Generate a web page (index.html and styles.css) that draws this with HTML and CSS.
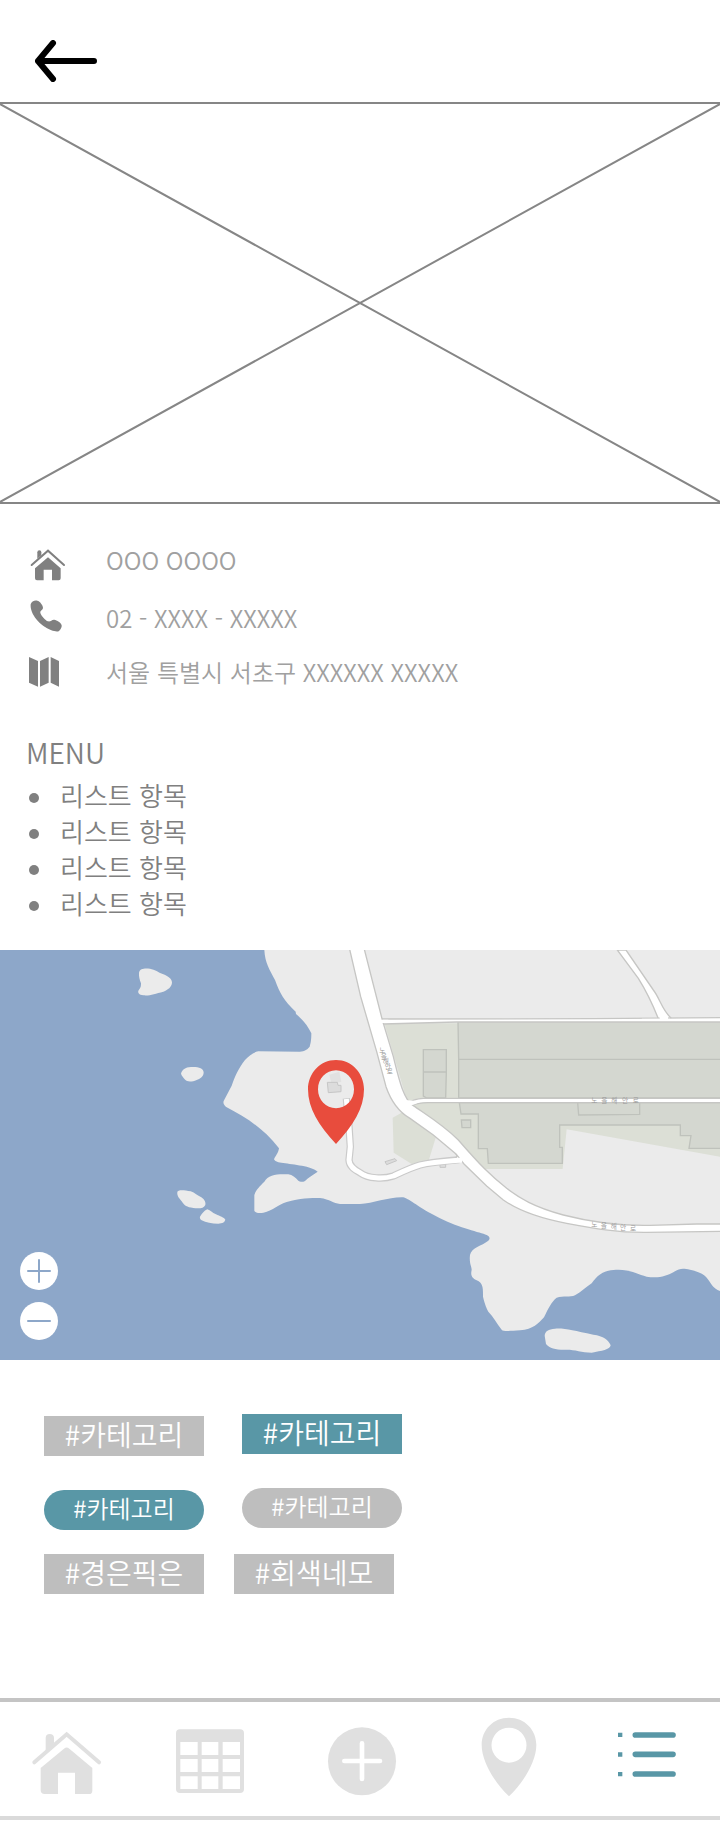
FILE: index.html
```html
<!DOCTYPE html>
<html lang="ko">
<head>
<meta charset="utf-8">
<meta name="viewport" content="width=device-width, initial-scale=1">
<title>OOO OOOO</title>
<link rel="stylesheet" href="styles.css">
</head>
<body>
<header class="topbar">
  <button class="back" type="button" aria-label="뒤로">
    <svg class="back-icon" viewBox="0 0 64 42" aria-hidden="true"><path d="M60 21H4M19 3L4 21L19 39"/></svg>
  </button>
</header>
<main>
  <div class="photo" role="img" aria-label="사진">
    <svg class="photo-cross" viewBox="0 0 100 100" preserveAspectRatio="none" aria-hidden="true"><path d="M0 0L100 100M100 0L0 100"/></svg>
  </div>

  <section class="info">
    <div class="info-row info-row--high">
      <svg class="info-icon" viewBox="0 -7 108 108" aria-hidden="true">
        <path class="fill" d="M15 66L54 33L92 66V96Q92 102 86 102H66V70H41V102H21Q15 102 15 96Z"/>
        <path class="fill" d="M22 37V18Q22 12 28 12Q34 12 34 18V27Z"/>
        <path class="line" d="M5 56L54 13L102 56"/>
      </svg>
      <p class="info-text">OOO OOOO</p>
    </div>
    <div class="info-row info-row--low">
      <svg class="info-icon" viewBox="0 3 108 108" aria-hidden="true">
        <path class="fill" d="M2 19C4 10 14 6 22 8C30 9 39 23 39 29C39 36 30 37 31 44C33 53 46 67 54 70C62 72 65 64 73 65C80 66 94 74 95 82C96 88 92 95 87 99C83 102 72 100 64 97C30 84 -1 48 2 19Z"/>
      </svg>
      <p class="info-text">02 - XXXX - XXXXX</p>
    </div>
    <div class="info-row">
      <svg class="info-icon" viewBox="0 0 108 108" aria-hidden="true">
        <path class="fill" d="M-3 9L24 21V98L-3 86ZM30 21L56 9V86L30 98ZM62 9L87 21V98L62 86Z"/>
      </svg>
      <p class="info-text">서울 특별시 서초구 XXXXXX XXXXX</p>
    </div>
  </section>

  <section class="menu">
    <h2 class="menu-title">MENU</h2>
    <ul class="menu-list">
      <li class="menu-item">리스트 항목</li>
      <li class="menu-item">리스트 항목</li>
      <li class="menu-item">리스트 항목</li>
      <li class="menu-item">리스트 항목</li>
    </ul>
  </section>

  <section class="map" aria-label="지도">
    <svg class="map-art" viewBox="0 30 2160 1230" role="img" aria-label="노을해안로 지도">
      <g class="land">
        <path d="M793 30C795 70 810 90 825 120C840 160 850 180 887 215L888 222C915 245 925 262 934 280C934 300 932 310 929 320C920 332 908 335 895 335L775 334C760 336 745 350 735 360C712 390 705 410 695 437L671 483C668 492 675 497 680 502C740 533 790 565 837 625C835 640 825 650 822 658C825 665 835 668 850 669C880 674 935 678 953 695C940 705 925 712 915 723C908 727 900 726 895 722C885 712 878 705 865 703C835 701 805 703 793 725C780 738 767 750 763 765V812C766 820 780 819 790 818C820 812 830 795 860 786C900 774 930 774 960 774C990 778 1000 790 1020 792H1080C1120 790 1170 770 1210 772C1235 780 1250 800 1320 835C1380 865 1440 877 1460 885C1470 890 1471 896 1465 902C1445 918 1415 922 1410 945C1407 970 1415 980 1415 990C1410 1010 1420 1015 1430 1021C1450 1030 1449 1045 1449 1070C1455 1095 1460 1105 1465 1115C1480 1130 1490 1150 1505 1169C1510 1175 1530 1173 1560 1171C1600 1168 1615 1150 1632 1132C1645 1105 1655 1085 1670 1073C1690 1067 1710 1073 1725 1066C1745 1055 1755 1043 1775 1030C1790 1010 1805 992 1840 990C1890 986 1910 1002 1940 1010C1975 1016 2000 1008 2020 997C2040 983 2050 985 2070 989C2110 998 2120 1010 2132 1030C2142 1045 2150 1050 2160 1053V30Z"/>
        <path d="M417 98C420 84 435 85 450 86C465 88 475 97 488 102C505 108 516 117 516 128C514 142 505 148 490 155C465 161 450 168 430 166C417 165 412 158 416 151C423 142 423 138 423 130C419 118 416 110 417 98Z"/>
        <path d="M543 400C550 384 560 381 580 381C597 381 611 386 611 398C610 410 600 416 590 420C575 426 562 427 554 418C549 412 544 407 543 400Z"/>
        <path d="M532 756C533 749 550 749 572 754C585 759 592 766 604 772C614 779 618 787 616 795C612 806 595 806 580 804C560 802 553 796 547 787C541 777 530 770 532 756Z"/>
        <path d="M600 830C605 822 612 812 622 808C632 811 636 818 648 823C660 829 672 832 676 839C674 847 667 850 655 851C635 851 618 848 605 841C600 837 599 834 600 830Z"/>
        <path d="M1634 1187C1636 1172 1645 1168 1665 1166C1695 1164 1720 1172 1780 1184C1810 1188 1826 1200 1832 1216C1830 1229 1805 1233 1775 1238C1745 1237 1725 1229 1700 1229C1670 1230 1650 1226 1638 1212Z"/>
      </g>
      <path class="park" d="M1153 250H2160V650L1700 568L1688 687H1455L1220 480ZM1178 533L1210 515L1308 590L1285 665L1235 672L1181 638Z"/>
      <g class="block">
        <path d="M1374 244H2170V358H1376ZM1376 358H2170V474H1376Z"/>
        <path d="M1378 488L1383 522H1435V626H1462L1465 670H1687V622H1679V555H2041V587H2073L2067 625H2170V488Z"/>
        <path d="M1733 488L1736 525L1919 523V488ZM1270 329H1339V396H1270ZM1270 396H1339L1337 474H1280L1270 468ZM1384 540H1412V563H1386Z"/>
      </g>
      <g class="house">
        <path class="faint" d="M988 404L1018 395L1024 426L994 430Z"/>
        <path d="M982 427H1012L1014 436H1023V455L985 458ZM1155 665L1185 656L1190 662L1160 674ZM1320 670H1337V682H1320Z"/>
      </g>
      <path class="casing lane" d="M1039 475L1047 560L1051 620L1047 660C1048 680 1065 690 1080 698C1105 716 1150 718 1180 708C1210 694 1235 682 1260 675C1300 665 1330 664 1378 659"/>
      <path class="road-edge" d="M1852 30L1915 115C1940 155 1955 185 1975 236H2015C1985 210 1980 175 1960 150L1878 30ZM1366 640Q1375 648 1366 656L1398 668Z"/>
      <path class="road-edge" d="M1140 237L1780 236L2170 233V246H1370L1150 252ZM1225 490C1235 480 1245 476 1270 475H2170V488H1290C1260 487 1250 490 1235 496Z"/>
      <path class="road-edge" d="M1049 28L1082 170L1130 335L1158 440C1172 480 1195 515 1230 535L1300 585L1368 642L1392 672L1460 738L1510 780C1560 815 1620 835 1700 850C1780 865 1850 878 1940 877L2170 874V852H2090L1950 856C1850 858 1760 843 1690 825C1600 800 1560 775 1520 745C1470 705 1440 675 1375 600C1330 555 1280 525 1240 497C1210 480 1195 410 1180 350L1153 260L1147 240L1093 28Z"/>
      <path class="lane" d="M1039 477L1047 560L1051 620L1047 660C1048 680 1065 690 1080 698C1105 716 1150 718 1180 708C1210 694 1235 682 1260 675C1300 665 1330 664 1386 660"/>
      <path class="road-fill" d="M1120 239H1165V249H1140ZM1925 236H2010L2000 242H1930ZM1978 228H2004V240H1980ZM1215 480L1250 483L1260 487L1240 494L1210 500Z"/>
      <g class="road-name">
        <text x="1774 1804 1834 1866 1898" y="488">노을해안로</text>
        <text x="1774 1802 1832 1860 1890" y="860 864 868 871 874">노을해안로</text>
        <text x="1138 1142 1148 1154 1160" y="339 356 373 388 403">노을해안로</text>
      </g>
      <path class="pin" fill-rule="evenodd" d="M1008 360C1056 360 1092 400 1092 448C1092 505 1060 556 1008 612C956 556 924 505 924 448C924 400 960 360 1008 360ZM1008 391C978 391 954 416 954 448S978 505 1008 505S1062 480 1062 448S1038 391 1008 391Z"/>
    </svg>
    <div class="zoom">
      <button class="zoom-button" type="button" aria-label="확대"><svg class="zoom-icon" viewBox="0 0 38 38" aria-hidden="true"><path d="M8 19H30M19 8V30"/></svg></button>
      <button class="zoom-button" type="button" aria-label="축소"><svg class="zoom-icon" viewBox="0 0 38 38" aria-hidden="true"><path d="M8 19H30"/></svg></button>
    </div>
  </section>

  <section class="tags" aria-label="카테고리">
    <div class="tag-row tag-row--stepped">
      <button class="tag" type="button">#카테고리</button>
      <button class="tag tag--active" type="button">#카테고리</button>
    </div>
    <div class="tag-row tag-row--stepped tag-row--pills">
      <button class="tag tag--pill tag--active" type="button">#카테고리</button>
      <button class="tag tag--pill" type="button">#카테고리</button>
    </div>
    <div class="tag-row">
      <button class="tag" type="button">#경은픽은</button>
      <button class="tag" type="button">#회색네모</button>
    </div>
  </section>
</main>

<nav class="tabs" aria-label="메인">
  <a class="tab" href="#home" aria-label="홈"><svg class="tab-icon" viewBox="0 66 432 342" aria-hidden="true">
    <path class="fill" d="M122 264L192 206Q200 199 208 206L277 264V332Q277 342 267 342H225V278H174V342H134Q122 342 122 330Z"/>
    <path class="fill" d="M137 213V174Q137 162 149 162Q162 162 162 174V190Z"/>
    <path class="line" d="M103 247L200 163L297 247"/>
  </svg></a>
  <a class="tab" href="#calendar" aria-label="달력"><svg class="tab-icon" viewBox="432 66 432 342" aria-hidden="true">
    <path class="fill" fill-rule="evenodd" d="M540 148H720Q732 148 732 160V328Q732 339 720 339H540Q528 339 528 328V160Q528 148 540 148ZM541 186V225H593V186ZM605 186V225H655V186ZM668 186V225H720V186ZM541 237V276H593V237ZM605 237V276H655V237ZM668 237V276H720V237ZM541 289V327H593V289ZM605 289V327H655V289ZM668 289V327H720V289Z"/>
  </svg></a>
  <a class="tab" href="#add" aria-label="추가"><svg class="tab-icon" viewBox="864 66 432 342" aria-hidden="true">
    <circle class="fill" cx="1086" cy="244" r="102"/>
    <path class="plus" d="M1033 243H1140M1086 190V297"/>
  </svg></a>
  <a class="tab" href="#map" aria-label="지도"><svg class="tab-icon" viewBox="1296 66 432 342" aria-hidden="true">
    <path class="fill" fill-rule="evenodd" d="M1527 113C1574 113 1609 149 1609 195C1609 245 1570 308 1527 349C1484 308 1445 245 1445 195C1445 149 1480 113 1527 113ZM1527 143A52 52 0 1 0 1527 248A52 52 0 1 0 1527 143Z"/>
  </svg></a>
  <a class="tab tab--active" href="#list" aria-label="목록" aria-current="page"><svg class="tab-icon" viewBox="1728 66 432 342" aria-hidden="true">
    <path class="bars" d="M1906 165H2019M1906 223H2019M1906 282H2019"/>
    <path class="fill" d="M1854 158H1867V171H1854ZM1854 217H1867V230H1854ZM1854 276H1867V289H1854Z"/>
  </svg></a>
</nav>
</body>
</html>
```
FILE: styles.css
```css
* {
  box-sizing: border-box;
}

body {
  margin: 0;
  background: #fff;
  color: #808080;
  font-family: "Noto Sans CJK KR", sans-serif;
  font-weight: 350;
}

button {
  margin: 0;
  padding: 0;
  border: 0;
  background: none;
  font: inherit;
  cursor: pointer;
}

svg {
  display: block;
}

.topbar {
  padding: 40px 34px 20px;
}

.back {
  display: block;
}

.back-icon {
  width: 64px;
  height: 42px;
  fill: none;
  stroke: #000;
  stroke-width: 6;
  stroke-linecap: round;
  stroke-linejoin: round;
}

.photo {
  height: 402px;
  border-top: 2px solid #868686;
  border-bottom: 2px solid #868686;
}

.photo-cross {
  width: 100%;
  height: 100%;
}

.photo-cross path {
  fill: none;
  stroke: #868686;
  stroke-width: 2;
  vector-effect: non-scaling-stroke;
}

.info {
  display: flex;
  flex-direction: column;
  gap: 16px;
  padding: 38px 30px 41px;
}

.info-row {
  display: flex;
  align-items: center;
  gap: 40px;
  min-height: 39px;
}

.info-row--high .info-text {
  align-self: flex-start;
}

.info-row--low .info-text {
  align-self: flex-end;
}

.info-icon {
  flex: none;
  width: 36px;
  height: 36px;
  overflow: visible;
}

.fill {
  fill: currentColor;
}

.line {
  fill: none;
  stroke: currentColor;
  stroke-width: 6;
  stroke-linecap: round;
}

.info-text {
  margin: 0;
  color: #a0a0a0;
  font-size: 24px;
  line-height: 36px;
}

.menu {
  padding: 0 26px 29px;
}

.menu-title {
  margin: 0 0 5px;
  font-size: 28px;
  font-weight: inherit;
  line-height: 40px;
}

.menu-list {
  margin: 0;
  padding: 0;
  list-style: none;
}

.menu-item {
  display: flex;
  align-items: center;
  gap: 21px;
  padding-left: 3px;
  font-size: 26px;
  line-height: 36px;
}

.menu-item::before {
  content: "";
  width: 10px;
  height: 10px;
  margin-top: 6px;
  border-radius: 50%;
  background: currentColor;
}

.map {
  position: relative;
  background: #8da7c9;
}

.map-art {
  width: 100%;
}

.land {
  fill: #ebebeb;
}

.park {
  fill: #dcdfd6;
}

.block {
  fill: #d4d7d0;
  stroke: #bfc2bc;
  stroke-width: 4;
}

.house {
  fill: #dcdcdc;
  stroke: #c6c6c6;
  stroke-width: 3;
}

.faint {
  fill: #e1e1e1;
  stroke: none;
}

.lane {
  fill: none;
  stroke: #fff;
  stroke-width: 15;
}

.casing {
  stroke: #cacaca;
  stroke-width: 22;
}

.road-edge {
  fill: #fff;
  stroke: #c6c6c4;
  stroke-width: 4;
}

.road-fill {
  fill: #fff;
}

.road-name {
  fill: #999;
  font-size: 20px;
}

.pin {
  fill: #e84c3d;
}

.zoom {
  position: absolute;
  bottom: 20px;
  left: 20px;
  display: grid;
  gap: 12px;
}

.zoom-button {
  width: 38px;
  height: 38px;
  border-radius: 50%;
  background: #fff;
}

.zoom-icon {
  width: 38px;
  height: 38px;
  fill: none;
  stroke: #8da7c9;
  stroke-width: 2;
  stroke-linecap: round;
}

.tags {
  display: flex;
  flex-direction: column;
  padding: 54px 44px 104px;
}

.tag-row {
  display: flex;
  gap: 30px;
}

.tag-row--stepped {
  gap: 38px;
  height: 42px;
  margin-bottom: 32px;
}

.tag-row--pills {
  margin-bottom: 24px;
}

.tag-row--stepped .tag:first-child {
  align-self: flex-end;
}

.tag {
  width: 160px;
  height: 40px;
  padding-bottom: 4px;
  background: #bebebe;
  color: #fff;
  font-size: 28px;
  line-height: 36px;
}

.tag--pill {
  border-radius: 20px;
  font-size: 24px;
}

.tag--active {
  background: #5997a6;
}

.tabs {
  display: flex;
  border-top: 4px solid #c4c4c4;
  border-bottom: 4px solid #dadada;
}

.tab {
  display: flex;
  flex: 1;
  justify-content: center;
  color: #e0e0e0;
}

.tab--active {
  color: #5997a6;
}

.tab-icon {
  width: 144px;
  height: 114px;
}

.tab-icon .line {
  stroke-width: 12;
}

.plus {
  fill: none;
  stroke: #fff;
  stroke-width: 14;
  stroke-linecap: round;
}

.bars {
  fill: none;
  stroke: currentColor;
  stroke-width: 17;
  stroke-linecap: round;
}
```
